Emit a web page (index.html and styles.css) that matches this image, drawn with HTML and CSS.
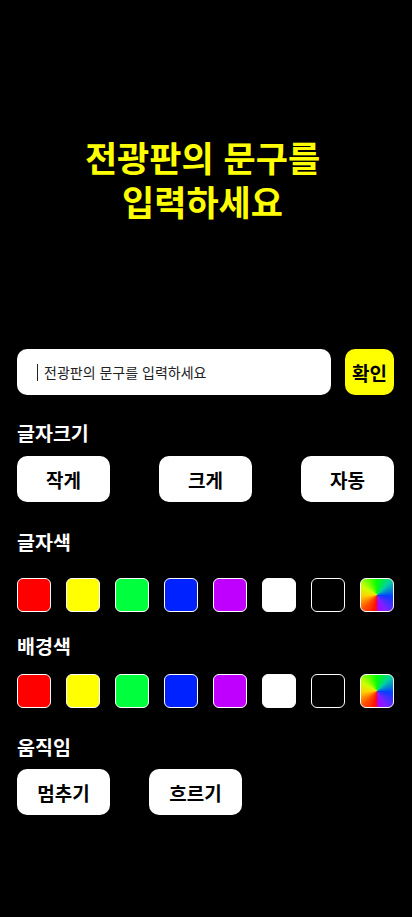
FILE: index.html
```html
<!DOCTYPE html>
<html lang="ko">
<head>
<meta charset="utf-8">
<title>전광판</title>
<link rel="stylesheet" href="styles.css">
</head>
<body>
<main class="page">
  <h1 class="title"><span class="tline">전광판의 문구를</span><span class="tline">입력하세요</span></h1>

  <div class="input-row">
    <div class="input"><span class="caret"></span><span class="placeholder">전광판의 문구를 입력하세요</span></div>
    <button class="ok">확인</button>
  </div>

  <section class="sec sec-size">
    <h2 class="label">글자크기</h2>
    <div class="btns spread">
      <button class="btn">작게</button>
      <button class="btn">크게</button>
      <button class="btn">자동</button>
    </div>
  </section>

  <section class="sec sec-fg">
    <h2 class="label">글자색</h2>
    <div class="swatches sw-fg">
      <span class="sw red"></span>
      <span class="sw yellow"></span>
      <span class="sw green"></span>
      <span class="sw blue"></span>
      <span class="sw purple"></span>
      <span class="sw white"></span>
      <span class="sw black"></span>
      <span class="sw rainbow"></span>
    </div>
  </section>

  <section class="sec sec-bg">
    <h2 class="label">배경색</h2>
    <div class="swatches sw-bg">
      <span class="sw red"></span>
      <span class="sw yellow"></span>
      <span class="sw green"></span>
      <span class="sw blue"></span>
      <span class="sw purple"></span>
      <span class="sw white"></span>
      <span class="sw black"></span>
      <span class="sw rainbow"></span>
    </div>
  </section>

  <section class="sec sec-move">
    <h2 class="label">움직임</h2>
    <div class="btns motion">
      <button class="btn">멈추기</button>
      <button class="btn">흐르기</button>
    </div>
  </section>
</main>
</body>
</html>
```
FILE: styles.css
```css
* { box-sizing: border-box; }
html, body {
  margin: 0;
  padding: 0;
  background: #000;
}
body {
  font-family: "Noto Sans CJK KR", "Noto Sans", sans-serif;
  color: #fff;
  width: 412px;
  height: 917px;
  overflow: hidden;
}
.page {
  padding: 0 18px 0 17px;
}
.title {
  margin: 135px 0 0;
  padding-right: 6px;
  font-size: 35px;
  line-height: 44px;
  font-weight: 700;
  color: #ffff00;
  text-align: center;
}
.tline {
  display: block;
  height: 44px;
}
.input-row {
  margin-top: 126px;
  display: flex;
  gap: 14px;
  height: 46px;
}
.input {
  flex: 1;
  background: #fff;
  border-radius: 10px;
  display: flex;
  align-items: center;
  padding-left: 20px;
}
.caret {
  width: 1px;
  height: 17px;
  background: #222;
  margin-right: 6px;
}
.placeholder {
  font-size: 14px;
  color: #222;
  line-height: 20px;
}
.ok {
  width: 49px;
  border: 0;
  border-radius: 10px;
  background: #ffff00;
  color: #000;
  font-family: inherit;
  font-size: 19px;
  font-weight: 700;
  padding: 0;
}
.sec { display: block; }
.label {
  margin: 0;
  font-size: 19.5px;
  line-height: 24px;
  font-weight: 700;
  color: #fff;
}
.sec-size { margin-top: 26px; }
.sec-fg { margin-top: 28px; }
.sec-bg { margin-top: 22px; }
.sec-move { margin-top: 27px; }
.btns { display: flex; margin-top: 11px; }
.spread { justify-content: space-between; }
.motion { gap: 39px; margin-top: 10px; }
.btn {
  width: 93px;
  height: 46px;
  border: 0;
  border-radius: 10px;
  background: #fff;
  color: #000;
  font-family: inherit;
  font-size: 19px;
  font-weight: 700;
  padding: 0;
}
.swatches {
  display: flex;
  justify-content: space-between;
}
.sw-fg { margin-top: 24px; }
.sw-bg { margin-top: 16px; }
.sw {
  width: 34px;
  height: 34px;
  border: 1px solid #fff;
  border-radius: 6px;
}
.red { background: #ff0000; }
.yellow { background: #ffff00; }
.green { background: #00ff3c; }
.blue { background: #0022ff; }
.purple { background: #c000ff; }
.white { background: #fff; }
.black { background: #000; }
.rainbow {
  background: conic-gradient(#00ff00 0deg, #00d0a0 45deg, #0040ff 95deg, #8020ff 150deg, #b000ff 180deg, #ff0000 180deg, #ff5000 225deg, #ffd000 265deg, #d0ff00 300deg, #40ff00 340deg, #00ff00 360deg);
}
```
